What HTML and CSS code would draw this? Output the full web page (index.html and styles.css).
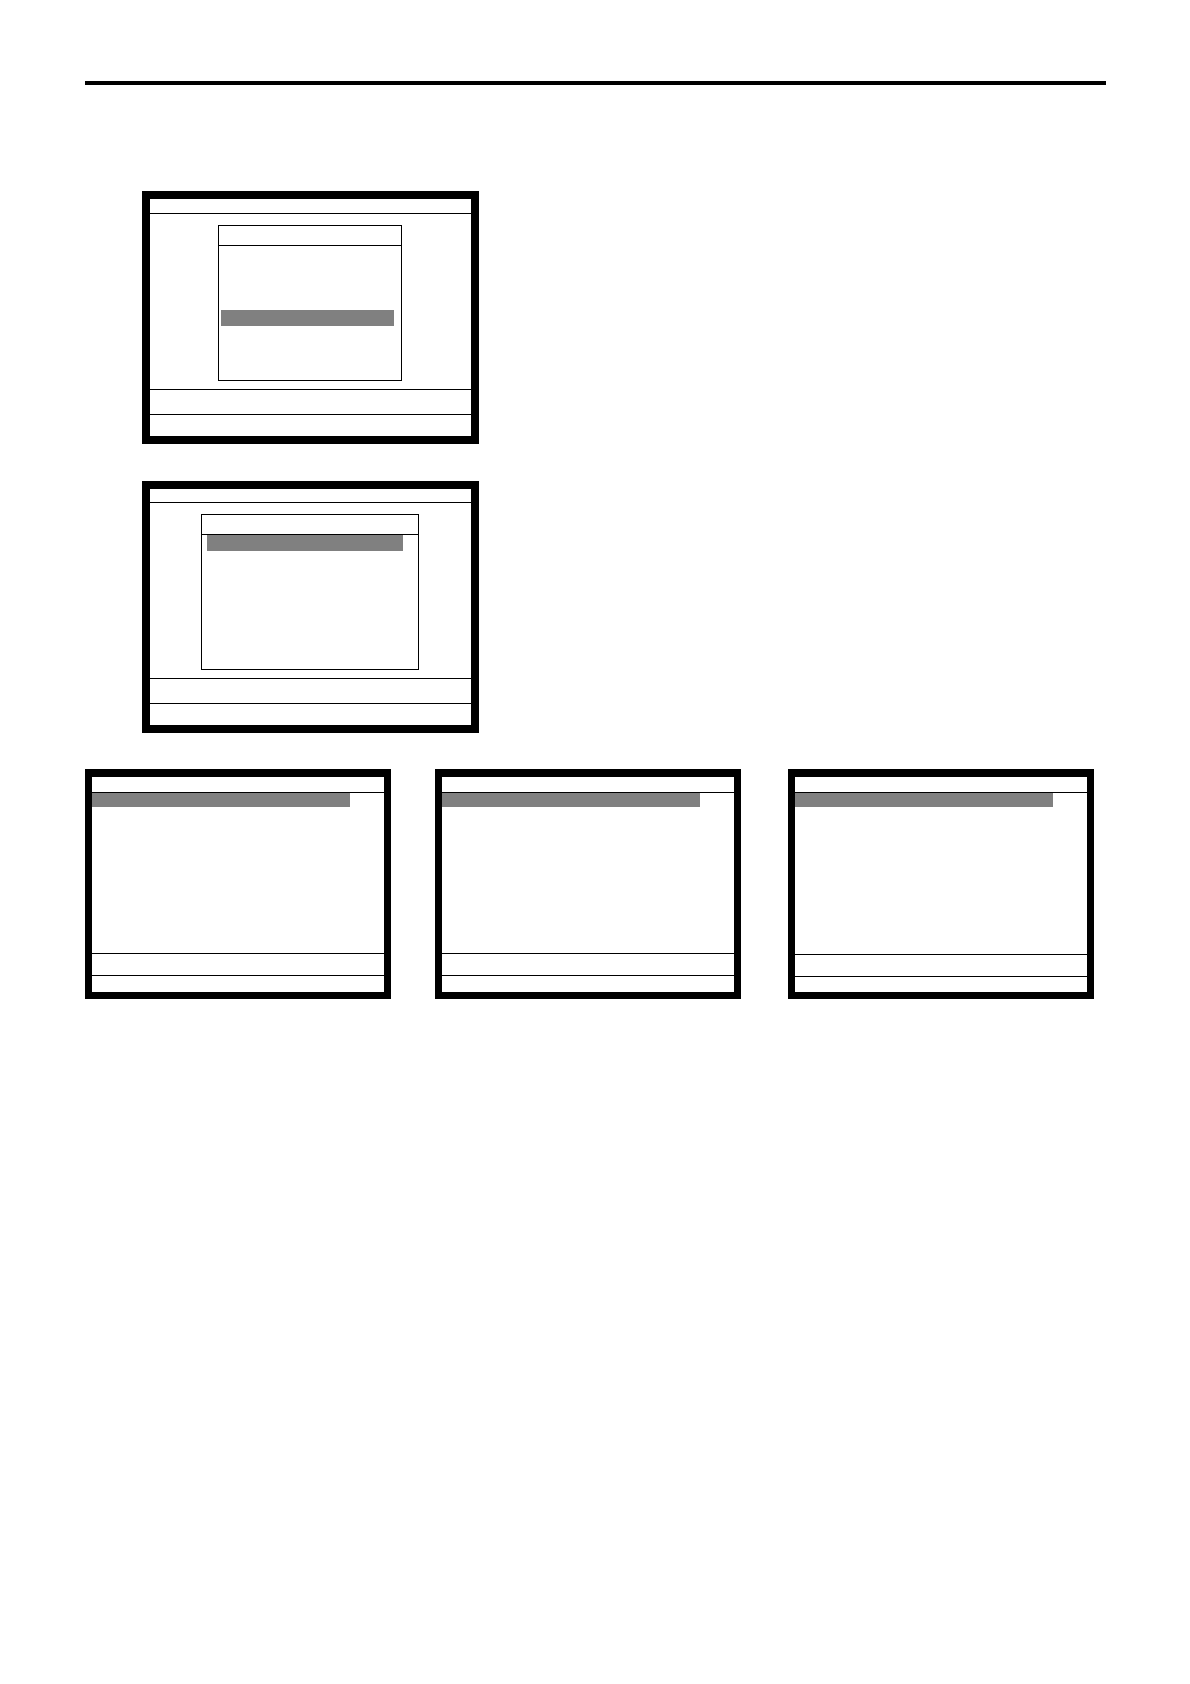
FILE: index.html
```html
<!DOCTYPE html>
<html lang="en">
<head>
  <meta charset="UTF-8">
  <title>Menu screens</title>
  <link rel="stylesheet" href="styles.css">
</head>
<body>
  <hr class="page-rule">

  <!-- popup menus -->
  <div class="menus">
    <div class="screen main-menu">
      <div class="title"></div>
      <div class="content">
        <div class="popup">
          <div class="popup-title"></div>
          <div class="selected"></div>
        </div>
      </div>
      <div class="message"></div>
      <div class="keys"></div>
    </div>

    <div class="screen sub-menu">
      <div class="title"></div>
      <div class="content">
        <div class="popup">
          <div class="popup-title"></div>
          <div class="selected"></div>
        </div>
      </div>
      <div class="message"></div>
      <div class="keys"></div>
    </div>
  </div>

  <!-- full screen lists -->
  <div class="lists">
    <div class="screen list">
      <div class="title"></div>
      <div class="content">
        <div class="selected"></div>
      </div>
      <div class="message"></div>
      <div class="keys"></div>
    </div>

    <div class="screen list second">
      <div class="title"></div>
      <div class="content">
        <div class="selected"></div>
      </div>
      <div class="message"></div>
      <div class="keys"></div>
    </div>

    <div class="screen list third">
      <div class="title"></div>
      <div class="content">
        <div class="selected"></div>
      </div>
      <div class="message"></div>
      <div class="keys"></div>
    </div>
  </div>
</body>
</html>
```
FILE: styles.css
```css
* { box-sizing: border-box; }
body {
  margin: 0;
  padding: 81px 84px 81px 85px;
  background-color: #fff;
  font-family: "Liberation Sans", sans-serif;
}
.page-rule {
  height: 4px;
  margin: 0 0 106px;
  border: 0;
  background-color: #000;
}

.menus {
  display: flex;
  flex-direction: column;
  gap: 37px;
  max-width: 394px;
  padding-left: 57px;
  margin-bottom: 36px;
}
.screen { border: 8px solid #000; }
.title { height: 15px; border-bottom: 1px solid #000; }
.sub-menu .title { height: 14px; }
.content { padding: 11px 69px 8px 68px; }
.sub-menu .content { padding: 11px 52px 8px 51px; }
.message { height: 25px; border-top: 1px solid #000; }
.keys { height: 22px; border-top: 1px solid #000; }

.popup { height: 156px; border: 1px solid #000; }
.popup-title { height: 20px; border-bottom: 1px solid #000; }
.selected { height: 16px; background-color: #808080; }
.main-menu .selected { margin: 64px 7px 0 2px; }
.sub-menu .selected { margin: 0 15px 0 5px; }

.lists {
  display: flex;
  margin-right: 12px;
}
.list { flex: 1; border-width: 8px 7px 7px; }
.list.second { margin-left: 44px; }
.list.third { margin-left: 47px; }
.list .title { height: 16px; }
.list .content { height: 160px; padding: 0; }
.list .message { height: 22px; }
.list .keys { height: 17px; }
.list .selected { height: 14px; margin-right: 34px; }
.list.third .content { height: 161px; }
.list.third .keys { height: 16px; }
```
